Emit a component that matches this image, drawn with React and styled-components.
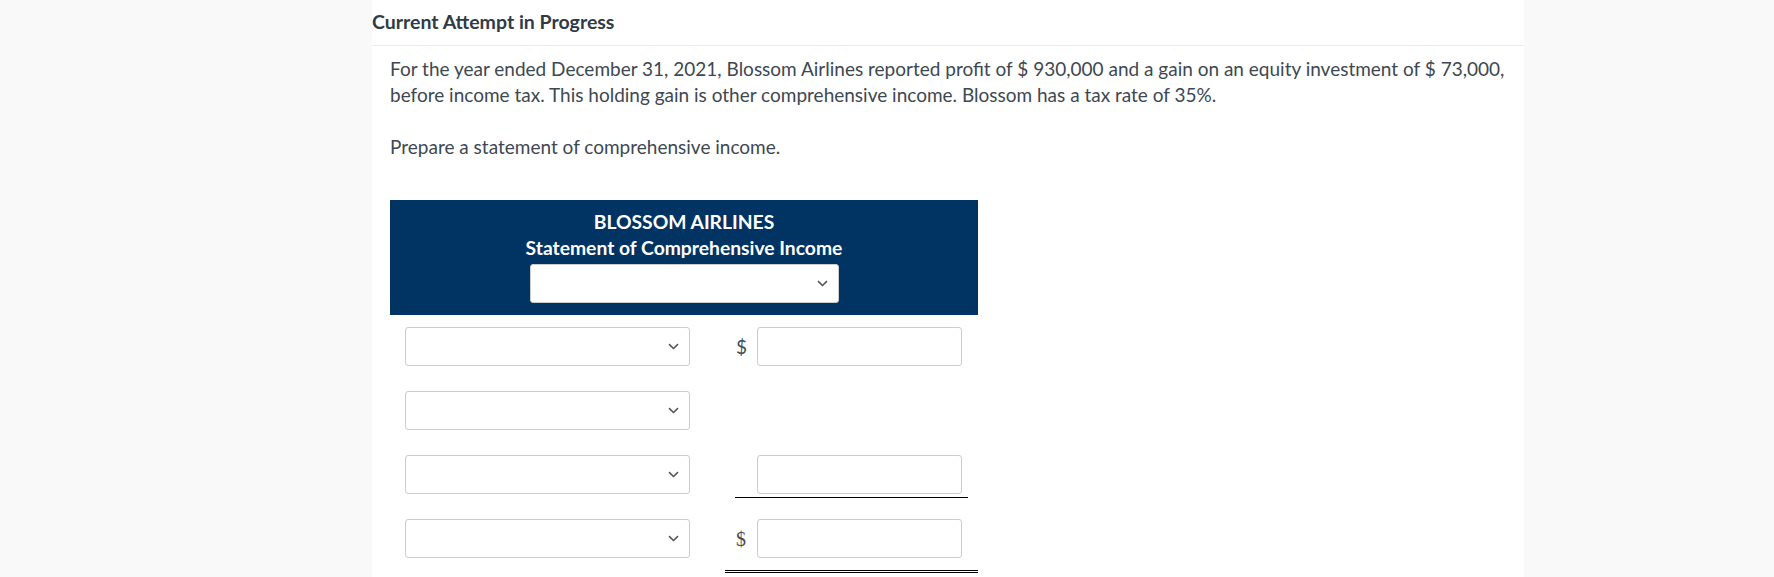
import React from "react";
import styled, { createGlobalStyle } from "styled-components";

const GlobalStyle = createGlobalStyle`
  html, body {
    margin: 0;
    padding: 0;
    background: #f9f9f9;
    font-family: Lato, "Open Sans", Arial, sans-serif;
  }
`;

const Page = styled.div`
  min-height: 100vh;
  display: flex;
`;

const Panel = styled.main`
  width: 1152px;
  margin-left: 372px;
  background: #ffffff;
  min-height: 100vh;
`;

const Title = styled.h2`
  margin: 0;
  padding: 10px 0 11px;
  font-size: 19.5px;
  line-height: 24px;
  font-weight: 700;
  color: #2f3b46;
  border-bottom: 1px solid #ebebeb;
`;

const Body = styled.section`
  padding: 10px 18px 0;
  color: #3d4852;
  font-size: 19px;
  line-height: 26px;

  p {
    margin: 0 0 26px;
  }
`;

const Statement = styled.div`
  width: 588px;
  margin-top: 40px;
`;

const Header = styled.div`
  background: #013363;
  color: #ffffff;
  padding: 9px 0 12px;
  display: flex;
  flex-direction: column;
  align-items: center;
  font-weight: 700;
  font-size: 19.3px;
  line-height: 26px;
`;

const SelectWrap = styled.div`
  position: relative;
  width: ${({ $w }) => $w}px;
  height: 39px;
  margin-top: ${({ $mt }) => $mt || 0}px;
`;

const Select = styled.select`
  appearance: none;
  -webkit-appearance: none;
  width: 100%;
  height: 100%;
  box-sizing: border-box;
  border: 1px solid #cccccc;
  border-radius: 3px;
  background: #ffffff;
  font-family: inherit;
  font-size: 16px;
  margin: 0;
`;

const Chevron = styled.svg`
  position: absolute;
  right: 11px;
  top: 16px;
  pointer-events: none;
`;

const Rows = styled.div`
  padding-top: 12px;
`;

const Row = styled.div`
  display: flex;
  align-items: flex-start;
  height: 64px;
  padding-left: 15px;
`;

const LabelCell = styled.div`
  width: 285px;
  margin-right: 35px;
`;

const AmountCell = styled.div`
  width: 253px;
  box-sizing: border-box;
  padding: 0 10px ${({ $total }) => ($total ? "12px" : "0")};
  border-bottom: ${({ $total }) => ($total ? "3px double #000" : "none")};
`;

const AmountInner = styled.div`
  display: flex;
  align-items: center;
  padding-right: 7px;
  padding-bottom: ${({ $sub }) => ($sub ? "3px" : "0")};
  border-bottom: ${({ $sub }) => ($sub ? "1px solid #000" : "none")};
`;

const Dollar = styled.span`
  width: 21px;
  flex: none;
  font-size: ${({ $serif }) => ($serif ? "20px" : "19px")};
  color: #444c55;
  font-family: ${({ $serif }) =>
    $serif ? '"Liberation Serif", "DejaVu Serif", serif' : "Lato, sans-serif"};
  padding-left: 1px;
`;

const Input = styled.input`
  width: 205px;
  height: 39px;
  box-sizing: border-box;
  border: 1px solid #cccccc;
  border-radius: 3px;
  margin: 0;
  font-family: inherit;
  font-size: 16px;
`;

const Dropdown = ({ width, mt }) => (
  <SelectWrap $w={width} $mt={mt}>
    <Select defaultValue="">
      <option value="" />
    </Select>
    <Chevron width="11" height="7" viewBox="0 0 11 7">
      <path d="M1 1.2 L5.5 5.5 L10 1.2" fill="none" stroke="#555" strokeWidth="1.6" />
    </Chevron>
  </SelectWrap>
);

const rows = [
  { dollar: true },
  { empty: true },
  { sub: true },
  { dollar: true, serif: true, total: true },
];

export default function App() {
  return (
    <Page>
      <GlobalStyle />
      <Panel>
        <Title>Current Attempt in Progress</Title>
        <Body>
          <p>
            For the year ended December 31, 2021, Blossom Airlines reported profit of $ 930,000 and a
            gain on an equity investment of $ 73,000, before income tax. This holding gain is other
            comprehensive income. Blossom has a tax rate of 35%.
          </p>
          <p>Prepare a statement of comprehensive income.</p>
          <Statement>
            <Header>
              <div>BLOSSOM AIRLINES</div>
              <div>Statement of Comprehensive Income</div>
              <Dropdown width={309} mt={3} />
            </Header>
            <Rows>
              {rows.map((r, i) => (
                <Row key={i}>
                  <LabelCell>
                    <Dropdown width={285} />
                  </LabelCell>
                  {!r.empty && (
                    <AmountCell $total={r.total}>
                      <AmountInner $sub={r.sub}>
                        <Dollar $serif={r.serif}>{r.dollar ? "$" : ""}</Dollar>
                        <Input type="text" />
                      </AmountInner>
                    </AmountCell>
                  )}
                </Row>
              ))}
            </Rows>
          </Statement>
        </Body>
      </Panel>
    </Page>
  );
}
